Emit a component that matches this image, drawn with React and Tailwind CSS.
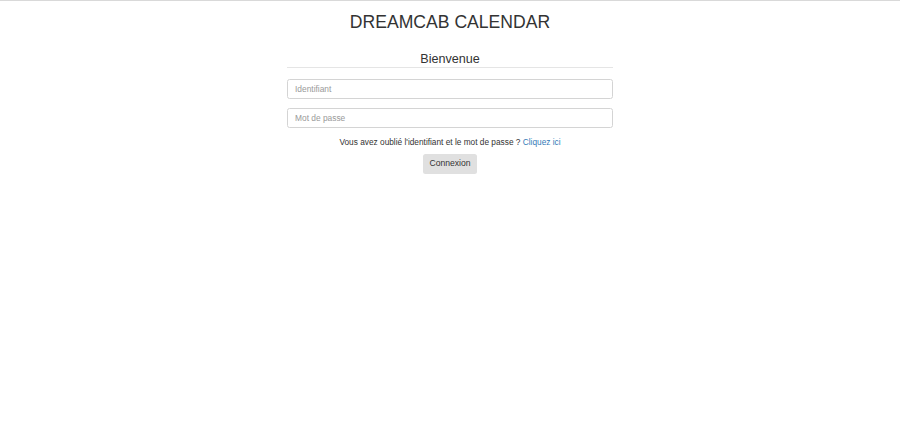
import React from 'react';

const App = () => {
  return (
    <div className="min-h-[445px] bg-white border-t border-[#d9d9d9] font-['Liberation_Sans',Arial,sans-serif] text-[#333]">
      <div className="w-[326px] mx-auto flex flex-col">
        <h2 className="mt-[12px] text-center text-[17.6px] leading-[19.8px] font-normal">
          DREAMCAB CALENDAR
        </h2>

        <form className="mt-[20px] flex flex-col" onSubmit={(e) => e.preventDefault()}>
          <div className="text-center text-[12.6px] leading-[12px] pb-[2px] border-b border-[#e5e5e5]">
            Bienvenue
          </div>

          <input
            type="text"
            placeholder="Identifiant"
            className="mt-[11px] h-[20px] px-[7px] text-[8.4px] border border-[#d4d4d4] rounded-[2.5px] placeholder:text-[#999] outline-none"
          />
          <input
            type="password"
            placeholder="Mot de passe"
            className="mt-[9px] h-[20px] px-[7px] text-[8.4px] border border-[#d4d4d4] rounded-[2.5px] placeholder:text-[#999] outline-none"
          />

          <p className="mt-[8px] text-center text-[8.3px] leading-[12px]">
            Vous avez oublié l'identifiant et le mot de passe ?{' '}
            <a href="#" className="text-[#337ab7]">Cliquez ici</a>
          </p>

          <div className="mt-[6px] flex justify-center">
            <button
              type="submit"
              className="w-[54px] h-[20px] text-[8.6px] bg-[#e0e0e0] rounded-[2.5px] text-[#333]"
            >
              Connexion
            </button>
          </div>
        </form>
      </div>
    </div>
  );
};

export default App;
